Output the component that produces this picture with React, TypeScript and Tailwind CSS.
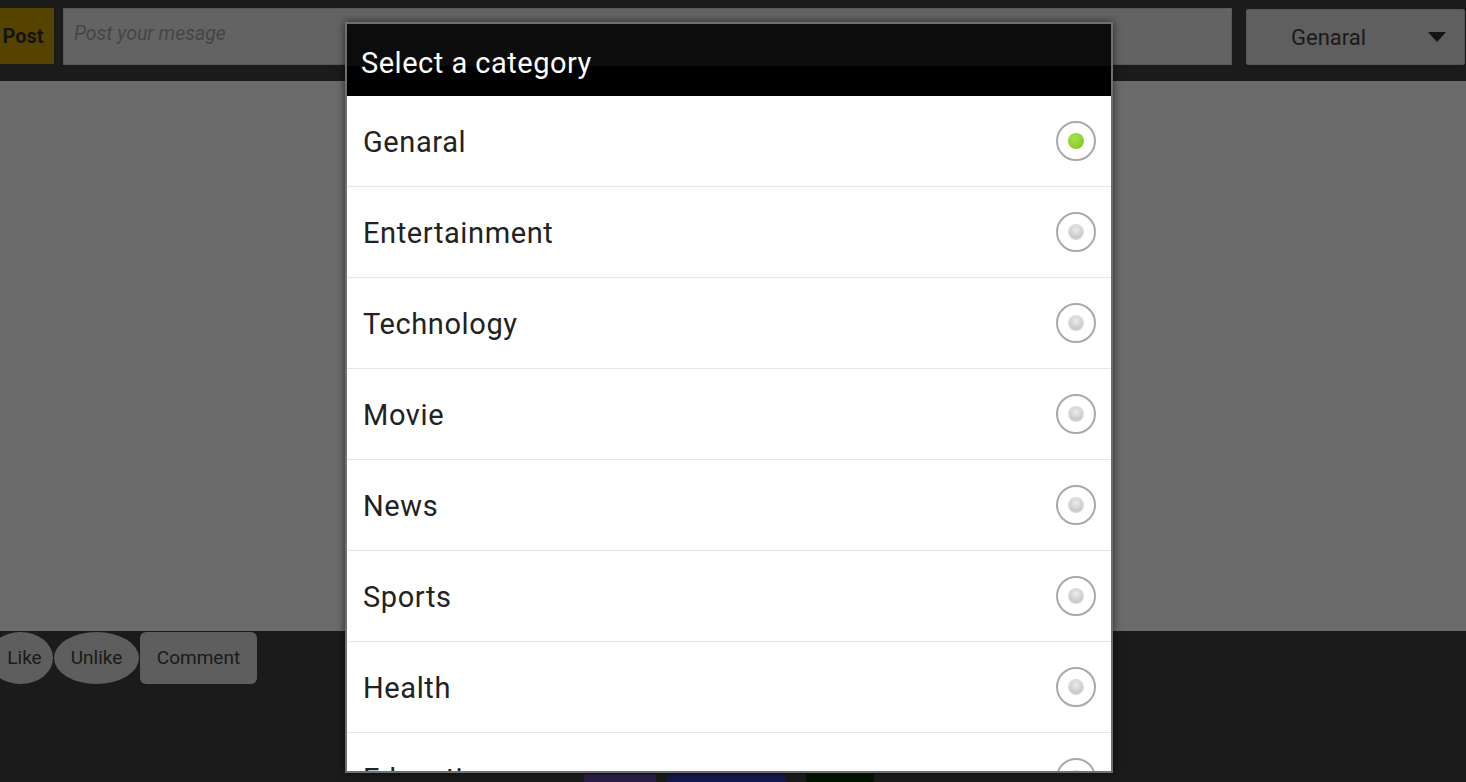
import React from 'react';

const categories = [
    'Genaral',
    'Entertainment',
    'Technology',
    'Movie',
    'News',
    'Sports',
    'Health',
    'Education',
];

function Radio({ checked }: { checked: boolean }) {
    return (
        <div className="flex h-[40px] w-[40px] items-center justify-center rounded-full border-2 border-[#a9a9a9] bg-white">
            {checked ? (
                <div className="h-[16px] w-[16px] rounded-full bg-[radial-gradient(circle_at_40%_35%,#a6e24a,#7cc21c)]" />
            ) : (
                <div className="h-[14px] w-[14px] rounded-full bg-[radial-gradient(circle_at_50%_35%,#ececec,#b8b8b8)] shadow-[0_0_0_1px_#d8d8d8]" />
            )}
        </div>
    );
}

export default function App() {
    return (
        <div className="relative flex h-[782px] w-full flex-col overflow-hidden bg-[#1b1b1b] font-['Roboto',sans-serif]">
            {/* top bar */}
            <div className="flex h-[81px] items-start pt-[8px]">
                <button className="h-[56px] w-[54px] bg-[#574300] pr-[8px] text-[20px] font-bold text-[#141414]">
                    Post
                </button>
                <div className="ml-[9px] h-[57px] w-[1169px] border border-[#585858] bg-[#636363] px-[10px] pt-[10px] text-[19.5px] italic text-[#454545]">
                    Post your mesage
                </div>
                <div className="ml-[14px] mt-[1px] flex h-[56px] w-[219px] items-center rounded-[2px] border border-[#575757] bg-[#5f5f5f] pl-[44px] pr-[18px]">
                    <span className="flex-1 text-[22px] text-[#1a1a1a]">Genaral</span>
                    <svg width="18" height="10" viewBox="0 0 18 10">
                        <path d="M0 0 L18 0 L9 10 Z" fill="#141414" />
                    </svg>
                </div>
            </div>

            {/* content area */}
            <div className="h-[550px] bg-[#6b6b6b]" />

            {/* bottom */}
            <div className="flex flex-1 flex-col">
                <div className="flex items-start pt-[1px]">
                    <button className="-ml-[12px] h-[52px] w-[65px] rounded-[50%] bg-[#5e5e5e] pl-[8px] text-[19px] text-[#1a1a1a]">
                        Like
                    </button>
                    <button className="ml-[1px] h-[52px] w-[85px] rounded-[50%] bg-[#5e5e5e] text-[19px] text-[#1a1a1a]">
                        Unlike
                    </button>
                    <button className="ml-[1px] h-[52px] w-[117px] rounded-[6px] bg-[#5e5e5e] text-[19px] text-[#1a1a1a]">
                        Comment
                    </button>
                </div>
                <div className="mt-auto flex h-[8px]">
                    <div className="ml-[584px] w-[72px] bg-[#2d1e4a]" />
                    <div className="ml-[11px] w-[119px] bg-[#141a4f]" />
                    <div className="ml-[20px] w-[68px] bg-[#001400]" />
                </div>
            </div>

            {/* dialog */}
            <div className="absolute left-[345px] top-[22px] flex h-[751px] w-[768px] flex-col overflow-hidden border-2 border-[#6f6f6f] bg-white shadow-[0_0_8px_rgba(0,0,0,0.6)]">
                <div className="h-[72px] shrink-0 bg-[linear-gradient(#0c0c0c_0%,#0c0c0c_58%,#000_58%,#000_100%)] pl-[14px] pt-[22px] text-[29px] leading-[34px] tracking-[0.5px] text-white">
                    Select a category
                </div>
                <div className="flex flex-col">
                    {categories.map((c, i) => (
                        <div
                            key={c}
                            className="flex h-[91px] shrink-0 items-center justify-between border-b border-[#e6e6e6] pl-[16px] pr-[15px]"
                        >
                            <span className="pt-[3px] text-[29px] tracking-[0.6px] text-[#222222]">{c}</span>
                            <Radio checked={i === 0} />
                        </div>
                    ))}
                </div>
            </div>
        </div>
    );
}
